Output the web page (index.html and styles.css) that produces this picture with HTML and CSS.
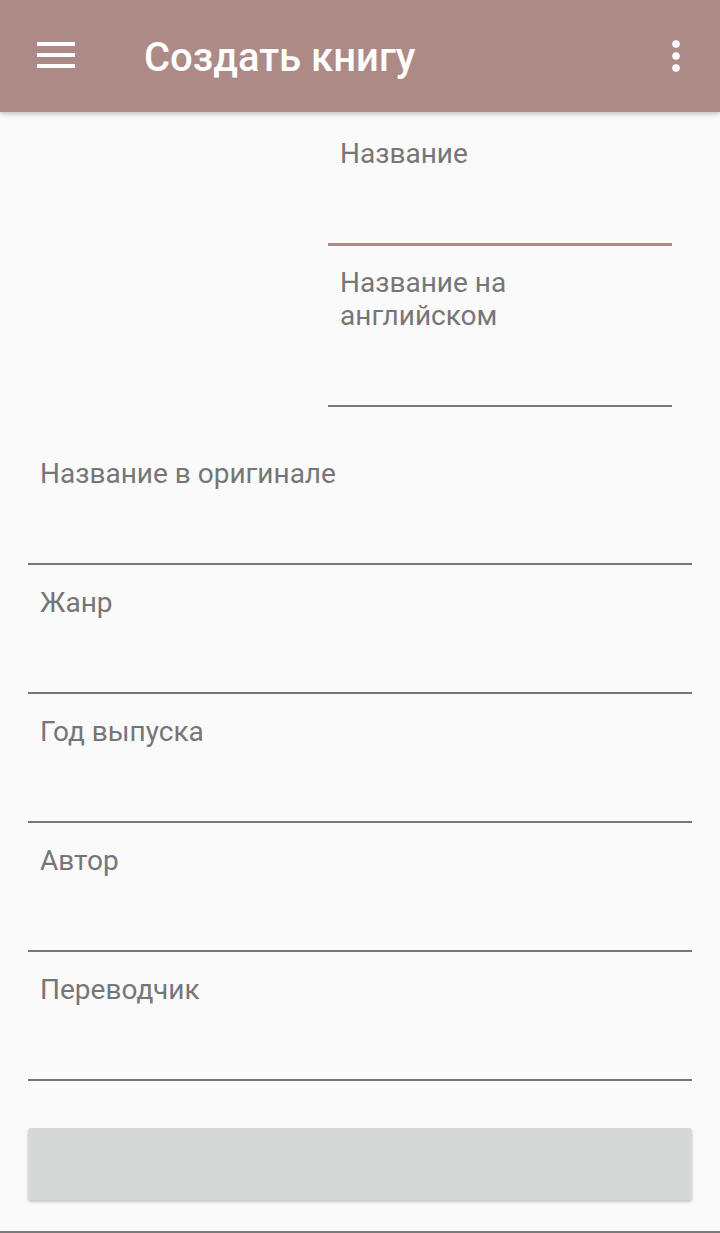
FILE: index.html
```html
<!DOCTYPE html>
<html lang="ru">
<head>
<meta charset="utf-8">
<title>Создать книгу</title>
<link rel="stylesheet" href="styles.css">
</head>
<body>
<div class="screen">
  <header class="appbar">
    <div class="icon-btn nav-btn">
      <svg width="48" height="48" viewBox="0 0 48 48" aria-hidden="true">
        <rect x="5" y="10" width="38" height="4" fill="#fff"/>
        <rect x="5" y="21" width="38" height="4" fill="#fff"/>
        <rect x="5" y="32" width="38" height="4" fill="#fff"/>
      </svg>
    </div>
    <h1 class="title">Создать книгу</h1>
    <div class="icon-btn menu-btn">
      <svg width="48" height="48" viewBox="0 0 48 48" aria-hidden="true">
        <circle cx="24" cy="12" r="3.8" fill="#fff"/>
        <circle cx="24" cy="24" r="3.8" fill="#fff"/>
        <circle cx="24" cy="36" r="3.8" fill="#fff"/>
      </svg>
    </div>
  </header>

  <main class="content">
    <div class="top-row">
      <div class="cover"></div>
      <div class="side-fields">
        <div class="field field-first focused"><span class="label">Название</span></div>
        <div class="field"><span class="label">Название на<br>английском</span></div>
      </div>
    </div>

    <div class="full-fields">
      <div class="field field-lead"><span class="label">Название в оригинале</span></div>
      <div class="field"><span class="label">Жанр</span></div>
      <div class="field"><span class="label">Год выпуска</span></div>
      <div class="field"><span class="label">Автор</span></div>
      <div class="field"><span class="label">Переводчик</span></div>
    </div>

    <div class="save-btn"></div>
  </main>
  <div class="spacer"></div>
</div>
</body>
</html>
```

FILE: styles.css
```css
html, body {
  margin: 0;
  padding: 0;
}

body {
  background: #fafafa;
  font-family: Roboto, "Noto Sans", "Liberation Sans", sans-serif;
}

.screen {
  min-height: 100vh;
  box-sizing: border-box;
  display: flex;
  flex-direction: column;
  border-bottom: 2px solid #7a7a7a;
}

.appbar {
  height: 112px;
  flex: none;
  background: #ad8a86;
  display: flex;
  align-items: center;
  box-shadow: 0 2px 5px rgba(0, 0, 0, 0.22);
  position: relative;
  z-index: 1;
}

.icon-btn {
  width: 48px;
  height: 48px;
  flex: none;
}

.icon-btn svg {
  display: block;
}

.nav-btn {
  margin-left: 32px;
}

.title {
  margin: 0 0 0 64px;
  padding-top: 4px;
  flex: 1;
  color: #fff;
  font-size: 40px;
  font-weight: 500;
  line-height: 48px;
}

.menu-btn {
  margin-right: 20px;
}

.content {
  padding: 0 28px;
}

.top-row {
  display: grid;
  grid-template-columns: 300px 344px;
}

.field {
  padding: 21px 12px 0;
  border-bottom: 2px solid #767676;
}

.label {
  display: block;
  font-size: 28px;
  line-height: 33px;
  color: #767676;
  padding-bottom: 73px;
}

.field-first {
  padding-top: 25px;
}

.field.focused {
  border-bottom: 3px solid #a88d87;
}

.field-first + .field {
  padding-top: 20px;
}

.field-lead {
  padding-top: 50px;
}

.save-btn {
  margin-top: 47px;
  height: 72px;
  background: #d6d8d7;
  border-radius: 3px;
  box-shadow: 0 2px 3px rgba(0, 0, 0, 0.22);
}

.spacer {
  flex: 1;
}
```
